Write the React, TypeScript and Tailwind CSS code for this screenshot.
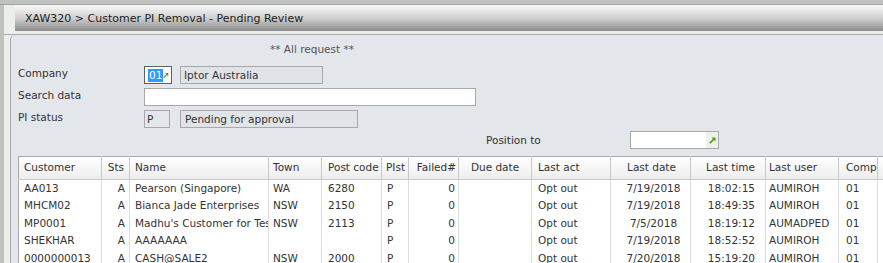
import React from 'react';

type Col = { key: string; label: string; w: number; align: 'l' | 'r' | 'c'; hp: string; bp: string };

const cols: Col[] = [
    { key: 'cust', label: 'Customer', w: 83, align: 'l', hp: 'pl-[5px]', bp: 'pl-[5px]' },
    { key: 'sts', label: 'Sts', w: 28, align: 'r', hp: 'pr-[5px]', bp: 'pr-[4px]' },
    { key: 'name', label: 'Name', w: 139, align: 'l', hp: 'pl-[5px]', bp: 'pl-[5px]' },
    { key: 'town', label: 'Town', w: 53, align: 'l', hp: 'pl-[4px]', bp: 'pl-[4px]' },
    { key: 'post', label: 'Post code', w: 60, align: 'l', hp: 'pl-[6px]', bp: 'pl-[6px]' },
    { key: 'pist', label: 'PIst', w: 27, align: 'l', hp: 'pl-[4px]', bp: 'pl-[5px]' },
    { key: 'failed', label: 'Failed#', w: 50, align: 'r', hp: 'pr-[2px]', bp: 'pr-[3px]' },
    { key: 'due', label: 'Due date', w: 73, align: 'c', hp: '', bp: '' },
    { key: 'act', label: 'Last act', w: 79, align: 'l', hp: 'pl-[6px]', bp: 'pl-[6px]' },
    { key: 'date', label: 'Last date', w: 80, align: 'c', hp: 'pl-[2px]', bp: 'pl-[6px]' },
    { key: 'time', label: 'Last time', w: 75, align: 'r', hp: 'pr-[10px]', bp: 'pr-[10px]' },
    { key: 'user', label: 'Last user', w: 73, align: 'l', hp: 'pl-[3px]', bp: 'pl-[3px]' },
    { key: 'comp', label: 'Comp', w: 39, align: 'l', hp: 'pl-[7px]', bp: 'pl-[7px]' },
    { key: 'x', label: '', w: 60, align: 'l', hp: '', bp: '' },
];

const rows: Record<string, string>[] = [
    { cust: 'AA013', sts: 'A', name: 'Pearson (Singapore)', town: 'WA', post: '6280', pist: 'P', failed: '0', due: '', act: 'Opt out', date: '7/19/2018', time: '18:02:15', user: 'AUMIROH', comp: '01' },
    { cust: 'MHCM02', sts: 'A', name: 'Bianca Jade Enterprises', town: 'NSW', post: '2150', pist: 'P', failed: '0', due: '', act: 'Opt out', date: '7/19/2018', time: '18:49:35', user: 'AUMIROH', comp: '01' },
    { cust: 'MP0001', sts: 'A', name: "Madhu's Customer for Testing", town: 'NSW', post: '2113', pist: 'P', failed: '0', due: '', act: 'Opt out', date: '7/5/2018', time: '18:19:12', user: 'AUMADPED', comp: '01' },
    { cust: 'SHEKHAR', sts: 'A', name: 'AAAAAAA', town: '', post: '', pist: 'P', failed: '0', due: '', act: 'Opt out', date: '7/19/2018', time: '18:52:52', user: 'AUMIROH', comp: '01' },
    { cust: '0000000013', sts: 'A', name: 'CASH@SALE2', town: 'NSW', post: '2000', pist: 'P', failed: '0', due: '', act: 'Opt out', date: '7/20/2018', time: '15:19:20', user: 'AUMIROH', comp: '01' },
];

const alignCls = { l: 'text-left', r: 'text-right', c: 'text-center' };

// little green "prompt" arrow used by lookup fields
function PromptArrow() {
    return (
        <svg width="7" height="7" viewBox="0 0 7 7">
            <path d="M2.5 0.5 H6.5 V4.5 Z" fill="#4f9a12" />
            <path d="M0.8 6.2 L4.6 2.4" stroke="#4f9a12" strokeWidth="1.6" />
        </svg>
    );
}

export default function App() {
    return (
        <div className="w-[883px] h-[263px] overflow-hidden bg-[#bfc2bf] font-['DejaVu_Sans',sans-serif] text-[10.5px] text-[#333]">
            <div className="h-[5px] border-b border-[#a3a3a3]" />
            <div className="flex h-[258px]">
                <div className="w-[4px] shrink-0" />
                <div className="flex-1 flex flex-col bg-[#eceeec]">
                    {/* title bar */}
                    <div className="ml-[11px] h-[26px] flex items-center pl-[10px] pt-[2px] bg-linear-to-b from-[#fafafa] via-[#d0d0d0] to-[#8c8c8c] text-[11px] text-[#222]">
                        XAW320 &gt; Customer PI Removal - Pending Review
                    </div>
                    <div className="h-[4px] border-b border-[#a8a8a8]" />
                    <div className="ml-[6px] flex-1 bg-[#e3e6ea] border-l border-[#a8a8a8] rounded-tl-[5px] pl-[7px] pt-[5px] overflow-hidden">
                        <div className="h-[18px] leading-[18px] pl-[252px] text-[#555]">** All request **</div>

                        <div className="mt-[8px] flex flex-col gap-[4px]">
                            <div className="flex items-center h-[18px]">
                                <div className="w-[126px] -mt-[2px]">Company</div>
                                <div className="w-[28px] h-[18px] border border-[#5b6068] bg-white flex items-center pl-[3px] pr-[2px] justify-between">
                                    <span className="bg-[#3399ff] text-white leading-[13px] px-[1px]">01</span>
                                    <PromptArrow />
                                </div>
                                <div className="ml-[8px] w-[143px] h-[18px] border border-[#a8a8a8] bg-[#e0e3e7] pl-[3px] leading-[16px]">Iptor Australia</div>
                            </div>
                            <div className="flex items-center h-[18px]">
                                <div className="w-[126px] -mt-[2px]">Search data</div>
                                <div className="w-[332px] h-[18px] border border-[#a8a8a8] bg-white" />
                            </div>
                            <div className="flex items-center h-[18px]">
                                <div className="w-[126px] -mt-[2px]">PI status</div>
                                <div className="w-[26px] h-[18px] border border-[#a8a8a8] pl-[2px] leading-[16px]">P</div>
                                <div className="ml-[10px] w-[178px] h-[18px] border border-[#a8a8a8] bg-[#e0e3e7] pl-[4px] leading-[16px]">Pending for approval</div>
                            </div>
                        </div>

                        <div className="mt-[3px] flex items-center h-[18px] pl-[468px]">
                            <div className="w-[144px] mt-[1px]">Position to</div>
                            <div className="w-[89px] h-[18px] border border-[#a8a8a8] bg-white flex justify-end">
                                <div className="w-[12px] h-full bg-[#eef0ee] flex items-center justify-center">
                                    <PromptArrow />
                                </div>
                            </div>
                        </div>

                        <table className="mt-[7px] table-fixed border-collapse bg-white border-t border-l border-[#a8a8a8]" style={{ width: cols.reduce((s, c) => s + c.w, 0) }}>
                            <colgroup>
                                {cols.map(c => <col key={c.key} style={{ width: c.w }} />)}
                            </colgroup>
                            <thead>
                                <tr className="h-[23px] bg-linear-to-b from-white to-[#ececec]">
                                    {cols.map(c => (
                                        <th key={c.key} className={`font-normal whitespace-nowrap overflow-hidden border-r border-b border-[#c8c8c8] ${alignCls[c.align]} ${c.hp}`}>
                                            {c.label}
                                        </th>
                                    ))}
                                </tr>
                            </thead>
                            <tbody>
                                {rows.map((r, i) => (
                                    <tr key={i} className="h-[17.5px]">
                                        {cols.map(c => (
                                            <td key={c.key} className={`p-0 leading-[17px] border-r border-[#dcdcdc] ${alignCls[c.align]} ${c.bp}`}>
                                                <div className="whitespace-nowrap overflow-hidden">{r[c.key] || ''}</div>
                                            </td>
                                        ))}
                                    </tr>
                                ))}
                            </tbody>
                        </table>
                    </div>
                </div>
            </div>
        </div>
    );
}
